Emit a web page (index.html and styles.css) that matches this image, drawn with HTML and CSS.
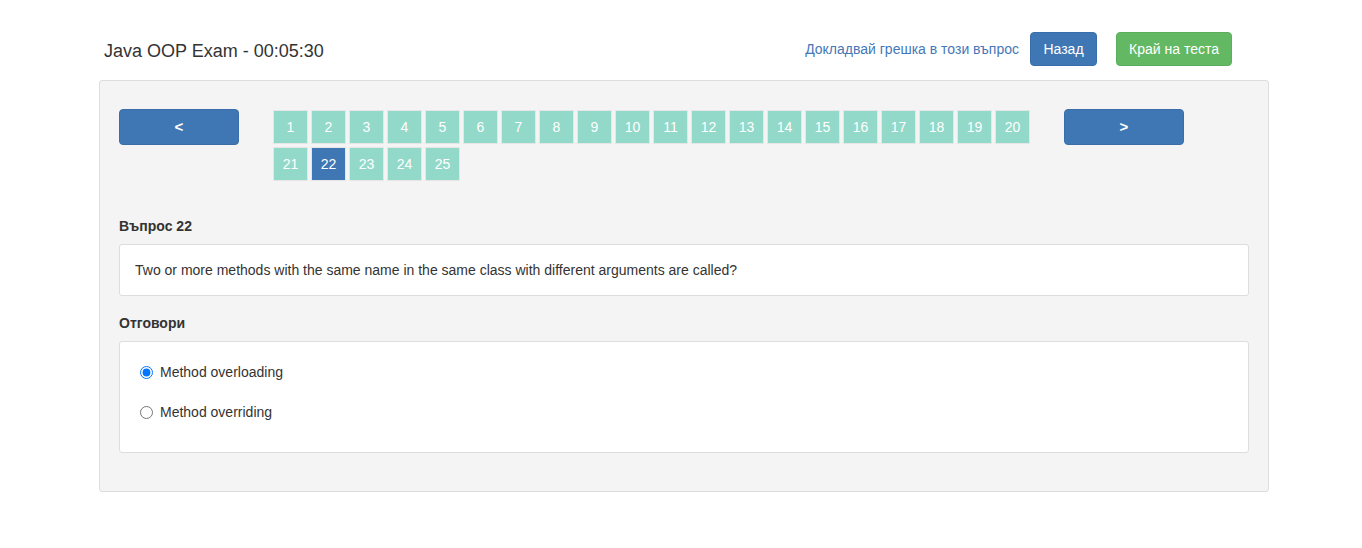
FILE: index.html
```html
<!DOCTYPE html>
<html lang="bg">
<head>
<meta charset="utf-8">
<title>Java OOP Exam</title>
<link rel="stylesheet" href="styles.css">
</head>
<body>
<div class="page">
  <header class="header">
    <h1 class="title">Java OOP Exam - 00:05:30</h1>
    <div class="actions">
      <a class="report" href="#">Докладвай грешка в този въпрос</a>
      <a class="btn btn-primary" href="#">Назад</a>
      <a class="btn btn-success" href="#">Край на теста</a>
    </div>
  </header>

  <main class="panel">
    <div class="nav">
      <a class="nav-btn" href="#">&lt;</a>
      <div class="pages">
        <a class="pg" href="#">1</a><a class="pg" href="#">2</a><a class="pg" href="#">3</a><a class="pg" href="#">4</a><a class="pg" href="#">5</a>
        <a class="pg" href="#">6</a><a class="pg" href="#">7</a><a class="pg" href="#">8</a><a class="pg" href="#">9</a><a class="pg" href="#">10</a>
        <a class="pg" href="#">11</a><a class="pg" href="#">12</a><a class="pg" href="#">13</a><a class="pg" href="#">14</a><a class="pg" href="#">15</a>
        <a class="pg" href="#">16</a><a class="pg" href="#">17</a><a class="pg" href="#">18</a><a class="pg" href="#">19</a><a class="pg" href="#">20</a>
        <a class="pg" href="#">21</a><a class="pg active" href="#">22</a><a class="pg" href="#">23</a><a class="pg" href="#">24</a><a class="pg" href="#">25</a>
      </div>
      <a class="nav-btn" href="#">&gt;</a>
    </div>

    <h2 class="label label-question">Въпрос 22</h2>
    <div class="box question">Two or more methods with the same name in the same class with different arguments are called?</div>

    <h2 class="label label-answers">Отговори</h2>
    <div class="box answers">
      <label class="radio"><input type="radio" name="a" checked> Method overloading</label>
      <label class="radio"><input type="radio" name="a"> Method overriding</label>
    </div>
  </main>
</div>
</body>
</html>
```

FILE: styles.css
```css
* { box-sizing: border-box; }

body {
  margin: 0;
  background: #fff;
  font-family: "Liberation Sans", Arial, sans-serif;
  font-size: 14px;
  line-height: 20px;
  color: #333;
}

.page {
  width: 1170px;
  margin-left: 99px;
}

.header {
  display: flex;
  align-items: flex-start;
  justify-content: space-between;
  height: 48px;
  padding: 32px 37px 0 5px;
  box-sizing: content-box;
  height: 34px;
  margin-bottom: 14px;
}

.title {
  margin: 0;
  padding-top: 2px;
  height: 34px;
  font-size: 18px;
  font-weight: normal;
  line-height: 34px;
  color: #333;
}

.actions {
  display: flex;
  align-items: center;
}

.report {
  color: #4677b8;
  text-decoration: none;
  margin-right: 11px;
}

.btn {
  display: inline-flex;
  align-items: center;
  justify-content: center;
  height: 34px;
  padding: 6px 12px;
  border: 1px solid transparent;
  border-radius: 4px;
  color: #fff;
  text-decoration: none;
  line-height: 20px;
}

.btn-primary {
  min-width: 67px;
  background: #3f77b4;
  border-color: #3a6ea8;
}

.btn-success {
  min-width: 116px;
  background: #63b863;
  border-color: #5cae5c;
  margin-left: 19px;
}

.panel {
  background: #f4f4f4;
  border: 1px solid #dddddd;
  border-radius: 3px;
  height: 412px;
  padding: 28px 19px 0 19px;
}

.nav {
  display: flex;
  align-items: flex-start;
}

.nav-btn {
  display: flex;
  align-items: center;
  justify-content: center;
  width: 120px;
  height: 36px;
  background: #3f77b4;
  border: 1px solid #3a6ea8;
  border-radius: 4px;
  color: #fff;
  font-weight: bold;
  text-decoration: none;
  font-size: 15px;
}

.pages {
  display: flex;
  flex-wrap: wrap;
  gap: 3px 3px;
  width: 757px;
  margin: 1px 34px 0 34px;
}

.pg {
  display: flex;
  align-items: center;
  justify-content: center;
  width: 35px;
  height: 34px;
  background: #92d9c9;
  border: 1px solid #e6e6e6;
  color: #fff;
  text-decoration: none;
}

.pg.active {
  background: #3f77b4;
}

.label {
  margin: 0 0 8px 0;
  font-size: 14px;
  font-weight: bold;
  line-height: 20px;
  color: #333;
}

.label-question { margin-top: 35px; }
.label-answers { margin-top: 17px; }

.box {
  background: #fff;
  border: 1px solid #dddddd;
  border-radius: 3px;
}

.question {
  padding: 15px;
}

.answers {
  display: flex;
  flex-direction: column;
  gap: 20px;
  padding: 20px 20px 30px 20px;
}

.radio {
  display: flex;
  align-items: center;
  height: 20px;
  cursor: pointer;
}

.radio input {
  width: 13px;
  height: 13px;
  margin: 0 7px 0 0;
}
```
